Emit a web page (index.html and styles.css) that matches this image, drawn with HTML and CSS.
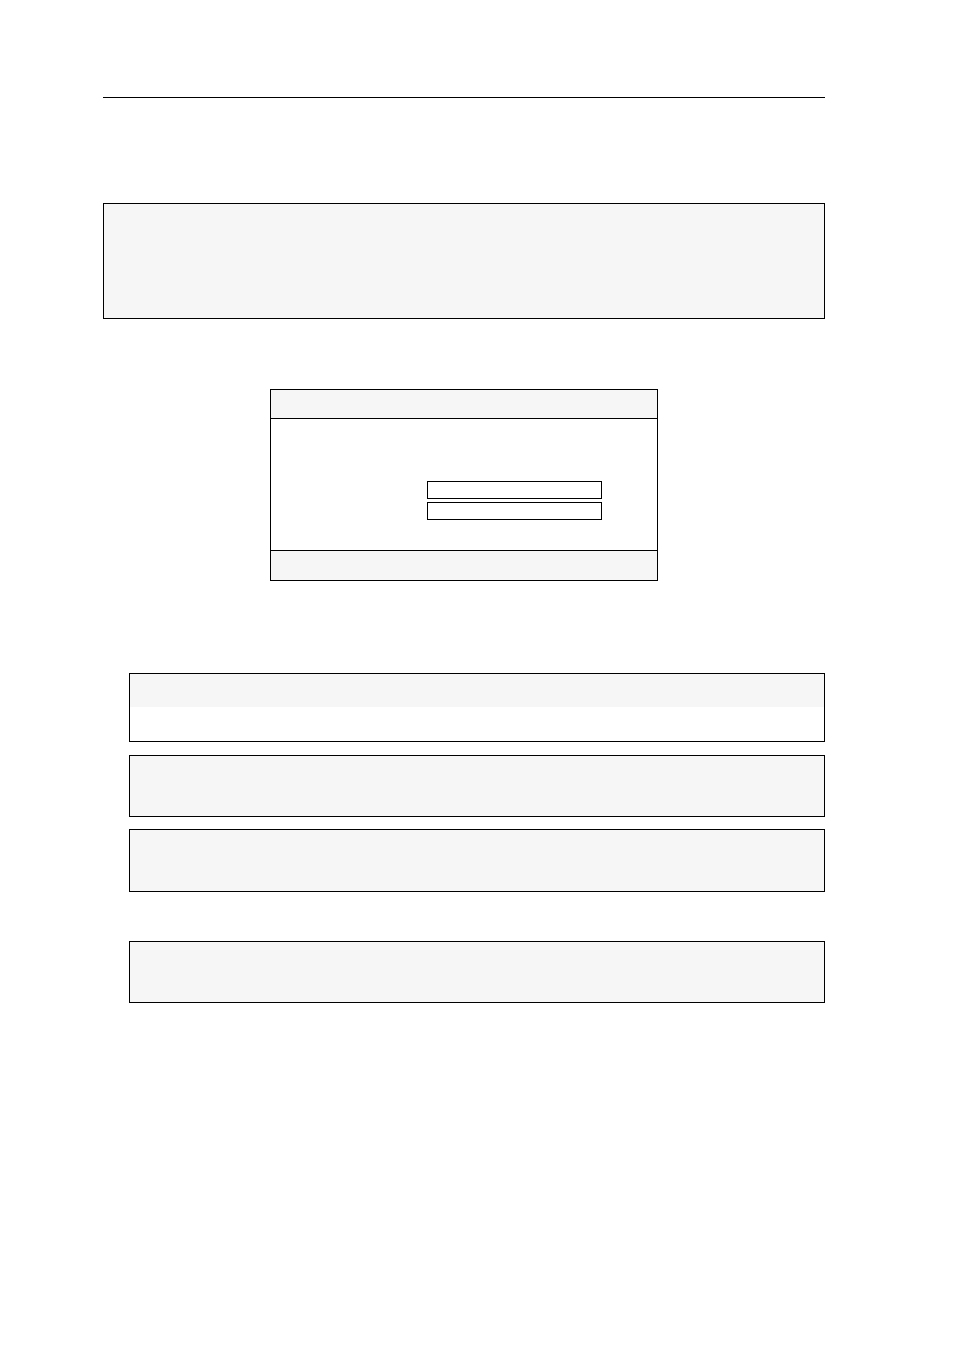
FILE: index.html
```
<!DOCTYPE html>
<html lang="en">
<head>
    <meta charset="UTF-8">
    <meta name="viewport" content="width=device-width, initial-scale=1.0">
    <title>Manual page</title>
    <link rel="stylesheet" href="styles.css">
</head>
<body>

<div class="page">
    <div class="rule"></div>

    <div class="panel panel-intro"></div>

    <div class="dialog">
        <div class="dialog-head"></div>
        <div class="dialog-body">
            <div class="field"></div>
            <div class="field"></div>
        </div>
        <div class="dialog-foot"></div>
    </div>

    <div class="steps">
        <div class="panel panel-split">
            <div class="split-top"></div>
        </div>
        <div class="panel panel-a"></div>
        <div class="panel panel-b"></div>
        <div class="panel panel-c"></div>
    </div>
</div>

</body>
</html>
```

FILE: styles.css
```
body {
    font-family: "Liberation Sans", Arial, sans-serif;
    margin: 0;
    background: #fff;
}
.page {
    width: 722px;
    margin-left: 103px;
    padding-top: 97px;
    display: flex;
    flex-direction: column;
}
.rule {
    height: 1px;
    background: #000;
}
.panel {
    box-sizing: border-box;
    border: 1px solid #000;
    background: #f6f6f6;
}
.panel-intro {
    margin-top: 105px;
    height: 116px;
}
.dialog {
    box-sizing: border-box;
    margin-top: 70px;
    margin-left: 167px;
    width: 388px;
    border: 1px solid #000;
    display: flex;
    flex-direction: column;
}
.dialog-head {
    height: 28px;
    background: #f6f6f6;
    border-bottom: 1px solid #000;
}
.dialog-body {
    height: 131px;
    background: #fff;
    padding: 62px 0 0 156px;
    box-sizing: border-box;
    display: flex;
    flex-direction: column;
    gap: 3px;
}
.field {
    box-sizing: border-box;
    width: 175px;
    height: 18px;
    border: 1px solid #000;
    background: #fff;
}
.dialog-foot {
    height: 29px;
    background: #f6f6f6;
    border-top: 1px solid #000;
}
.steps {
    margin-left: 26px;
    margin-top: 92px;
    display: flex;
    flex-direction: column;
}
.panel-split {
    height: 69px;
    background: #fff;
}
.split-top {
    height: 33px;
    background: #f6f6f6;
}
.panel-a {
    margin-top: 13px;
    height: 62px;
}
.panel-b {
    margin-top: 12px;
    height: 63px;
}
.panel-c {
    margin-top: 49px;
    height: 62px;
}
```
